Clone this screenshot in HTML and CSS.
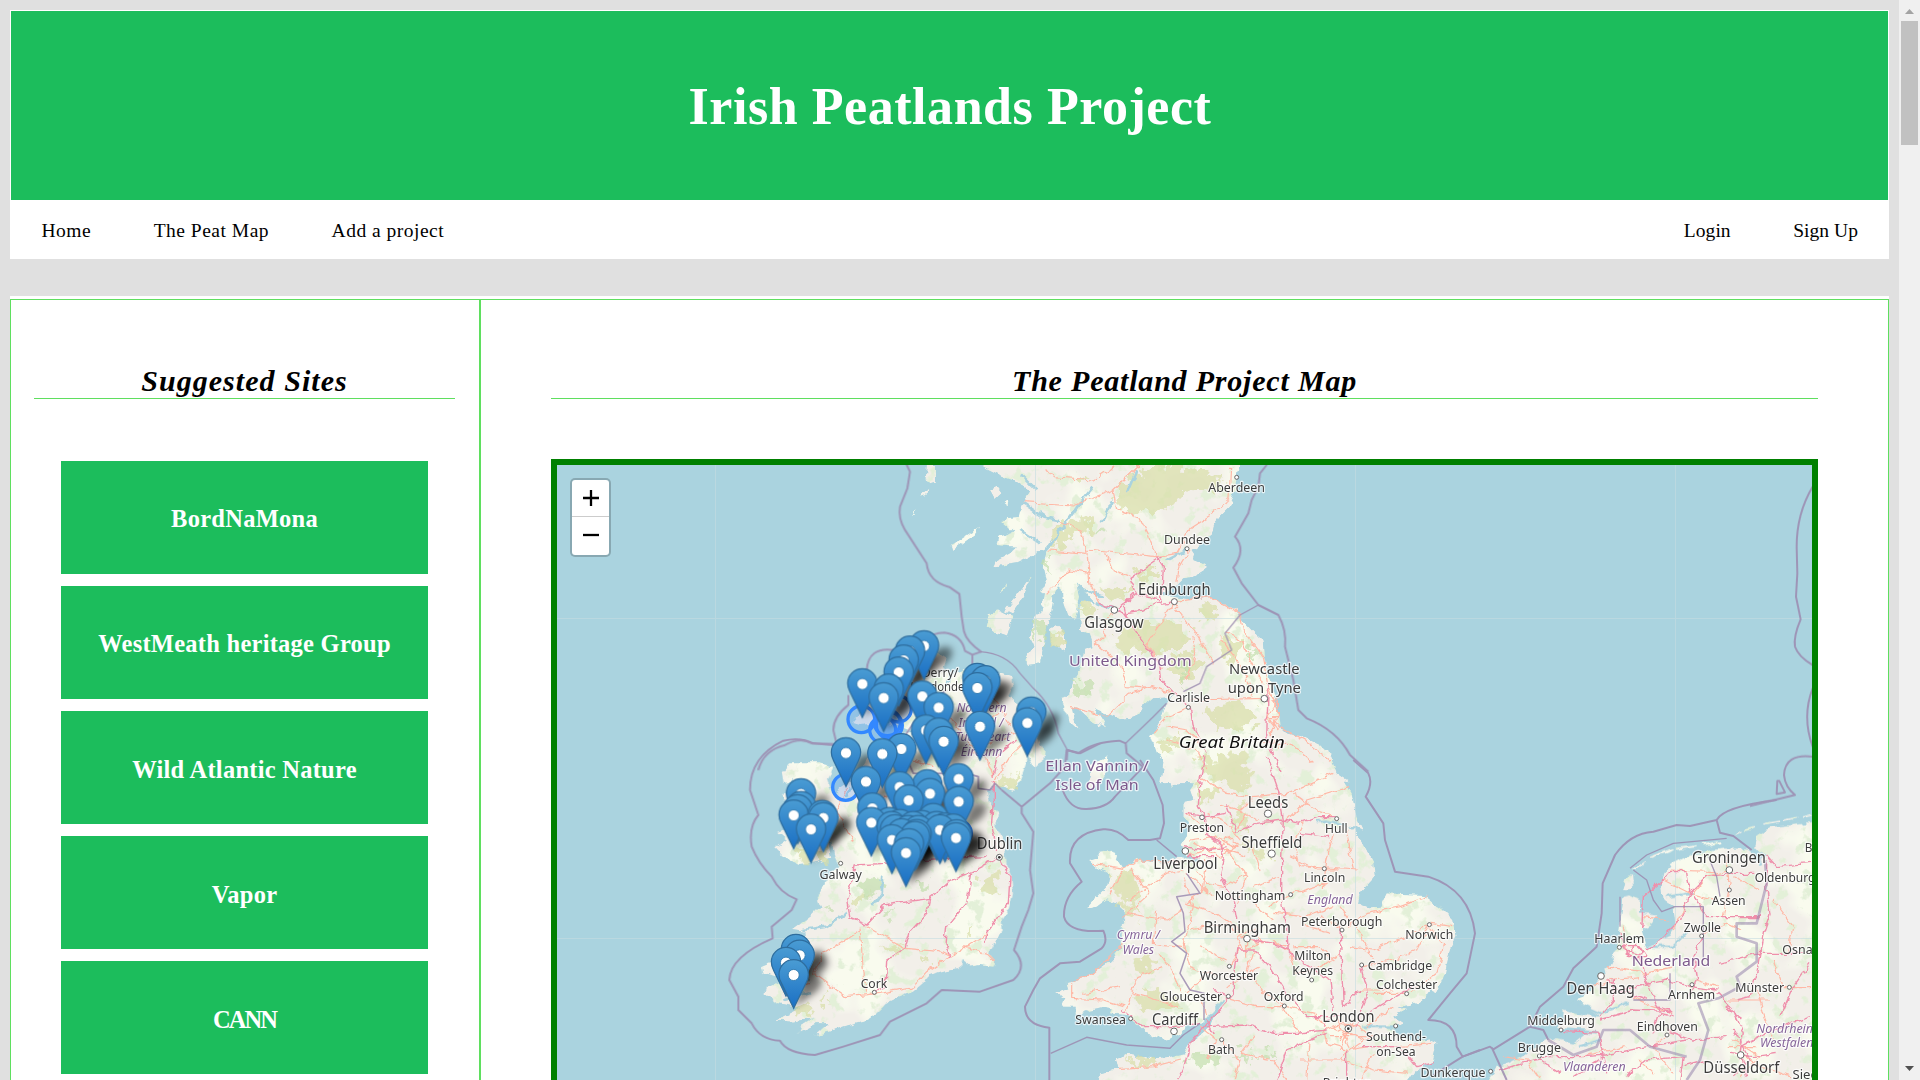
FILE: index.html
```html
<!DOCTYPE html>
<html lang="en">
<head>
<meta charset="utf-8">
<title>Irish Peatlands Project</title>
<link rel="stylesheet" href="styles.css">
</head>
<body>
<div class="page">
  <div class="top">
    <header class="banner"><h1>Irish Peatlands Project</h1></header>
    <nav class="nav">
      <a>Home</a><a>The Peat Map</a><a>Add a project</a>
      <a class="account first">Login</a><a class="account">Sign Up</a>
    </nav>
  </div>
  <div class="columns">
    <aside class="sidebar">
      <h2 class="wide">Suggested Sites</h2>
      <div class="sites">
        <a>BordNaMona</a>
        <a>WestMeath heritage Group</a>
        <a>Wild Atlantic Nature</a>
        <a>Vapor</a>
        <a class="tight">CANN</a>
      </div>
    </aside>
    <main class="main">
      <h2>The Peatland Project Map</h2>
      <div class="map">
        <svg class="tiles" viewBox="557 465 1255 615" width="1255" height="615">
          <defs>
            <linearGradient id="pinfill" x1="0" y1="0" x2="0" y2="1">
              <stop offset="0" stop-color="#4a9cd3"/><stop offset="1" stop-color="#1a6fc4"/>
            </linearGradient>
            <filter id="soft" x="-50%" y="-50%" width="200%" height="200%"><feGaussianBlur stdDeviation="11"/></filter>
            <filter id="veg" x="0" y="0" width="100%" height="100%">
              <feTurbulence type="fractalNoise" baseFrequency="0.07" numOctaves="4" seed="8" result="n"/>
              <feColorMatrix in="n" type="matrix" values="0 0 0 0 .77  0 0 0 0 .87  0 0 0 0 .69  0 9 0 0 -5.1" result="g"/>
              <feTurbulence type="fractalNoise" baseFrequency="0.018" numOctaves="3" seed="3" result="m"/>
              <feColorMatrix in="m" type="matrix" values="0 0 0 0 .95  0 0 0 0 .97  0 0 0 0 .86  5 0 0 0 -2.4" result="y"/>
              <feMerge result="all"><feMergeNode in="SourceGraphic"/><feMergeNode in="y"/><feMergeNode in="g"/></feMerge>
              <feComposite in="all" in2="SourceGraphic" operator="in"/>
            </filter>
            <filter id="rough" x="-5%" y="-5%" width="110%" height="110%">
              <feTurbulence type="fractalNoise" baseFrequency="0.12" numOctaves="2" seed="5" result="t"/>
              <feDisplacementMap in="SourceGraphic" in2="t" scale="7" xChannelSelector="R" yChannelSelector="G"/>
            </filter>
            <filter id="patchy" x="-5%" y="-5%" width="110%" height="110%">
              <feTurbulence type="fractalNoise" baseFrequency="0.1" numOctaves="3" seed="5" result="t"/>
              <feDisplacementMap in="SourceGraphic" in2="t" scale="26" xChannelSelector="R" yChannelSelector="G"/>
            </filter>
            <g id="pin">
              <g transform="scale(3.7) translate(-12.5 -13)">
                <path d="M12.5.6C5.9.6.6 5.9.6 12.5c0 2.6.8 4.900 1.900 6.900L12.500 40 22.500 19.400c1.100-2 1.900-4.300 1.900-6.900C24.400 5.900 19.100.6 12.500.6z" fill="url(#pinfill)" stroke="#2e6d9e" stroke-width="1"/>
                <circle cx="12.500" cy="13" r="4.500" fill="#fff" stroke="#2b76ad" stroke-width=".7"/>
              </g>
            </g>
            <path id="shade" d="M0 98 L30 22 Q50 -6 80 6 Q92 24 68 50 Z" fill="#000"/>
          </defs>
          <rect x="557" y="465" width="1255" height="615" fill="#aad3df"/>
          <g filter="url(#veg)"><g fill="#f2efe9" filter="url(#rough)">
            <g transform="translate(980 450) scale(.33333)">
              <path d="M785 20L770 80 765 120 750 170 720 200 702 225 695 255 665 280 635 300 645 315 640 330 665 340 684 352 660 370 640 380 610 385 590 405 560 425 520 430 580 440 640 450 690 440 730 460 770 480 785 510 820 545 848 570 852 620 872 690 890 770 900 830 920 850 970 860 1020 885 1050 915 1065 960 1065 1000 540 1000 550 940 530 910 513 860 530 830 545 800 560 760 575 742 520 745 490 770 460 800 415 805 380 790 345 775 375 820 370 832 340 815 310 790 295 775 275 770 285 810 293 840 270 820 262 790 248 760 250 740 270 735 275 700 300 660 312 600 340 590 330 555 300 540 295 470 310 455 345 460 310 420 290 400 300 440 285 510 260 490 245 440 240 400 220 440 215 480 205 520 190 590 180 640 140 645 140 620 160 590 150 560 165 500 185 480 195 430 180 430 200 390 190 345 205 290 170 310 110 340 40 350 45 335 90 310 110 290 50 285 55 260 100 245 70 220 80 205 120 200 130 160 150 120 100 90 60 75 10 50 0 20z"/>
              <path d="M20 530L30 490 60 480 100 500 80 560 50 550zM75 480L155 380 130 440 95 490zM210 540L230 525 255 550 255 605 215 580zM60 430L80 400 72 425zM30 120L50 110 65 130 45 148zM68 160L82 150 80 170zM-85 285L0 230-10 250-80 300zM-160 45H-132V95L-150 100-162 80zM-180 140L-155 112-157 135zM-200 195L-192 180-193 195z"/>
            </g>
            <g transform="translate(1040 760) scale(.33333)">
              <path d="M365-30L370 0 400 20 385 50 395 85 425 60 450 45 465 70 450 90 460 120 430 125 430 170 450 195 440 230 425 250 430 275 440 292 410 290 385 308 330 305 290 300 250 325 235 300 215 272 172 278 175 295 150 303 170 320 195 332 212 345 205 375 175 405 138 448 170 440 200 418 235 430 255 465 245 500 245 560 215 600 160 640 100 665 80 668 85 685 45 700 75 715 65 740 110 740 110 765 150 750 190 740 215 745 210 760 260 765 290 790 320 820 375 840 420 825 440 800 490 790 540 730 510 800 450 850 430 880 390 890 340 895 260 883 230 895 240 925 180 940 175 970H1100L1115 950 1130 930 1180 900 1190 850 1165 838 1130 845 1080 830 1060 805 1090 790 1060 770 1100 750 1070 740 1110 735 1150 720 1170 690 1190 700 1215 640 1230 570 1250 530 1240 480 1210 450 1150 405 1040 400 1020 440 990 442 955 430 960 400 1005 350 1000 310 960 230 920 195 850 183 930 200 970 212 950 170 935 100 915 65 930 68 890 40 875 0 865-30z"/>
              <path d="M140 78L150 50 150 15 202-12 195 40 165 85z"/>
            </g>
            <g transform="translate(700 610) scale(.33333)">
              <path d="M640 130L700 120 745 150 730 180 760 190 800 175 830 165 900 190 935 200 940 230 925 260 960 280 985 330 1010 380 1035 420 1030 455 1000 470 985 440 975 470 960 510 940 540 890 525 865 545 870 580 895 610 890 650 915 700 920 760 935 800 940 850 925 900 905 930 908 965 880 1000 865 1030 885 1055 880 1070 840 1065 810 1070 785 1050 780 1075 740 1080 690 1095 670 1120 640 1145 600 1160 560 1180 545 1195 530 1210 500 1230 430 1250 400 1262 345 1275 385 1240 350 1240 295 1268 300 1250 340 1225 280 1235 225 1232 260 1215 300 1195 235 1182 195 1150 200 1135 240 1115 270 1110 190 1090 185 1070 220 1055 215 1040 300 1030 340 1030 320 1000 315 965 275 960 330 920 360 890 350 860 385 800 415 770 400 740 350 760 300 765 250 740 225 715 260 690 230 665 290 650 240 620 265 590 250 560 285 510 250 520 245 490 270 460 360 460 400 470 385 510 400 550 440 520 470 500 500 450 520 420 560 405 580 385 600 370 640 365 600 350 550 340 480 345 455 340 480 310 500 260 530 230 560 190 610 150z"/>
            </g>
            <g transform="translate(1440 800) scale(.33333)">
              <path d="M120 870L170 805 240 770 300 730 330 712 400 730 450 690 350 685 370 650 370 630 410 640 480 650 410 600 430 590 470 550 500 510 530 450 540 380 550 290 570 285 600 300 600 340 650 345 640 370 605 390 620 440 690 405 705 370 700 320 670 300 665 240 670 215 700 190 760 160 850 145 925 145 945 180 980 165 945 150 950 110 990 80 1050 75 1140 65V870z"/>
              <path d="M545 270L560 225 580 222 582 248 560 272zM580 207l38-24 4 5-38 24zM628 170l70-26 4 7-70 24zM708 143l62-8v7l-62 8zM788 133l50-10v7l-48 9zM885 103l20-10v6l-18 8zM915 88l30-8v6l-28 8zM965 70l55-10v6l-52 9zM1030 58l45-9v6l-43 9zM1085 48l30-5v6l-28 5z"/>
            </g>
          </g></g>
          <!-- upland and heath areas -->
          <g fill="#d8dfa8" opacity=".7" filter="url(#patchy)">
            <g transform="translate(980 450) scale(.33333)"><path d="M410 120L470 70 560 45 650 50 730 90 720 125 650 120 590 150 520 190 450 190 405 160zM220 250L250 220 340 205 350 235 280 255 240 300 220 270zM350 430L400 400 450 410 450 440 380 450zM460 380L510 345 530 370 480 395zM400 550L480 520 600 515 640 560 600 600 560 600 500 610 420 600zM300 470L340 465 350 490 310 510zM650 480L700 455 720 490 670 515zM560 640L620 600 660 640 640 690 590 690 550 660zM680 770L780 755 830 800 790 850 740 830 700 830zM530 890L590 850 610 880 560 910zM740 560L790 580 750 640 720 620zM210 550L250 540 250 590 220 590zM290 80L320 75 310 105 280 100z"/></g>
            <g transform="translate(1040 760) scale(.33333)"><path d="M470-10L610-15 640 50 610 95 540 70 500 40zM460 90L530 80 540 100 490 125zM580 150L610 130 620 210 590 190zM600 230L690 290 670 310 640 290zM220 340L280 330 300 400 270 420 300 480 260 450 230 390zM280 600L340 590 330 640 290 640zM280 700L370 690 420 740 300 750zM260 895L350 890 340 915 280 910z"/></g>
            <g transform="translate(700 610) scale(.33333)"><path d="M840 800L890 765 900 780 880 860 850 850zM900 500L960 490 950 530 910 535zM800 950L820 935 810 980 795 985zM270 1180L340 1185 330 1220 290 1210zM280 710L390 730 370 755 290 745zM360 1160L380 1150 370 1190zM560 1010L610 1010 590 1030 560 1030zM660 1030L690 1040 670 1070zM450 860L500 840 510 850 470 890z"/></g>
          </g>
          <g fill="#c3dfae" opacity=".7" filter="url(#patchy)">
            <g transform="translate(980 450) scale(.33333)"><path d="M290 690L330 680 340 720 300 740zM190 340L210 330 205 370zM170 510L190 520 175 590 165 570zM590 620L640 650 610 700zM340 240L370 235 370 260zM800 590L830 600 820 630z"/></g>
            <g transform="translate(1040 760) scale(.33333)"><path d="M440 895L520 870 560 890 470 915zM570 870L630 875 620 900zM640 890L710 870 700 890z"/></g>
            <g transform="translate(700 610) scale(.33333)"><path d="M480 820L530 790 550 830 510 870zM540 920L580 900 570 940zM380 890L410 885 400 910zM640 820L690 810 680 840z"/></g>
          </g>
          <!-- sea lochs, estuaries and rivers -->
          <g fill="none" stroke="#aad3df" stroke-width="8" filter="url(#rough)">
            <g transform="translate(980 450) scale(.33333)"><path d="M130 160L190 200 240 210M200 295L300 160 340 110M120 240L180 280M310 420L370 440M350 460L420 485M560 330L620 300M365 215L400 150M440 130L470 60M170 120L120 70"/></g>
            <g transform="translate(700 610) scale(.33333)"><path d="M310 960L380 950 440 910M550 800L545 850 520 885M480 470L440 560M750 190L740 230M400 740L390 690M270 1110L330 1110M250 1170L330 1150"/></g>
            <g transform="translate(1440 800) scale(.33333)"><path d="M400 605L480 640 560 610M370 690L470 700M480 720L420 740M620 440L700 440 750 390M680 290L760 280M945 150L960 190"/></g>
            <g transform="translate(1040 760) scale(.33333)"><path d="M830 185L860 182 920 195M970 800L1080 800M490 790L550 720M415 285L480 300"/></g>
          </g>
          <g stroke="#c5dde2" stroke-width="1" opacity=".6"><path d="M715.500 465V1080M1035.500 465V1080M1355.500 465V1080M1675.500 465V1080M557 618.500H1812M557 938.500H1812"/></g>
          <g id="roads" fill="none" stroke-linejoin="round" filter="url(#rough)"></g>
          <g fill="none" stroke="#9c8bb0" stroke-width="6" stroke-linejoin="round" opacity=".85">
            <g transform="translate(540 450) scale(.33333)"><path d="M1098 40L1110 65 1102 115 1080 170Q1074 205 1095 240L1160 340Q1165 395 1228 411L1258 432 1265 500 1272 545Q1280 575 1323 605L1297 614 1275 603Q1265 555 1213 548 1180 548 1150 570M1297 614V660M1060 600Q985 590 980 660M925 735V765Q880 800 880 840L890 882 815 880Q780 860 735 885 670 900 655 960"/></g>
            <g transform="translate(700 610) scale(.33333)"><path d="M400 405L340 400Q300 380 250 392 150 440 150 540L175 615Q145 650 155 710 175 760 215 800 240 850 290 868L275 900 215 950 218 985Q90 1040 88 1110L115 1160V1200L155 1240Q180 1290 240 1292 260 1330 345 1335L430 1310 540 1275 570 1235 680 1180 725 1140 840 1145 940 1110Q985 1070 942 1020L965 950 985 900 1000 850 990 780 1000 665 965 610V590L905 540M965 590L1050 520 1095 470 1100 420 1140 430 1200 400"/>
              <path stroke-width="5" d="M905 540L885 520 870 540 835 535 835 500 800 490 640 490 600 400 640 340 680 280 740 240"/></g>
            <g transform="translate(980 450) scale(.33333)"><path d="M262 900L260 930M262 900L295 910Q340 875 418 872L437 880 440 910 500 960M860 45L840 70 835 110 815 150 805 190 765 260Q800 300 760 353L785 400 835 465 895 495Q920 540 915 590L940 690 955 780 980 805Q1070 840 1110 915L1165 965"/>
              <path stroke-width="4" d="M0 605Q80 610 120 670L160 715Q220 770 235 850L262 900M437 880L520 800 560 760M835 465L780 495 735 550 755 600 680 650 660 700 610 725"/></g>
            <g transform="translate(1040 760) scale(.33333)"><path d="M300 0L340 60 368 135 372 190 360 235 330 240 265 240Q230 205 190 208 85 220 90 310L125 365Q70 410 72 470 85 520 190 512 205 545 185 565L120 605 60 610 0 655-20 690-45 740Q-45 795 28 803V970M68 90Q90 150 140 147 200 145 225 110L310 20M940 0L985 40Q1000 70 977 110L1030 190 1035 240 1065 335 1165 350Q1290 390 1305 520L1280 640 1230 700 1165 780Q1250 780 1250 860L1268 890 1320 870M1268 890L1180 945"/>
              <path stroke-width="4.500" d="M32 880L140 832 260 855 390 865 430 825 480 790M350 240L410 290M440 340L480 400 410 410 430 460 435 515 395 545 440 580 420 640 450 690 492 700V780"/></g>
            <g transform="translate(1440 800) scale(.33333)"><path d="M68 770L150 740 160 748 270 680 300 620 370 560 400 505 470 440 485 340 488 250 525 165Q570 100 640 95L710 75 750 78 830 60Q850 20 1010 0M155 742L200 840M270 680L310 690 325 720M830 60L840 98 880 108 935 150"/>
              <path stroke-width="4" d="M580 210L620 240 640 300 665 335 705 320M570 205L620 165 700 130 860 115M805 170L830 230 840 290M700 320L790 320 790 480M540 290L540 380M580 600L690 600 690 520"/>
              <path stroke-width="8" opacity=".7" d="M975 180L980 250 950 370 890 370 890 410 950 430 950 485 890 530 900 560 835 595 775 610 805 690 780 780 740 840M325 720L400 765 470 740 490 690 570 690 630 740 740 770"/></g>
            <g transform="translate(1380 450) scale(.33333)"><path d="M1298 110Q1250 190 1250 290L1252 370 1248 440 1262 508Q1240 560 1245 590 1255 620 1298 645M1298 715Q1265 800 1298 890M1298 920Q1215 910 1212 975 1215 1010 1245 1035L1110 1068M1192 993H1198L1215 1027 1190 1032z"/></g>
          </g>
          <g id="cities"></g>
          <g id="labels"></g>
          <g transform="translate(700 610) scale(.33333)">
            <g fill="#3388ff" fill-opacity=".2" stroke="#3388ff" stroke-width="10">
              <circle cx="484" cy="328" r="40"/><circle cx="437" cy="532" r="39"/><circle cx="595" cy="297" r="39"/><circle cx="548" cy="360" r="39"/><circle cx="568" cy="346" r="39"/><circle cx="562" cy="338" r="39"/><circle cx="775" cy="670" r="39"/>
            </g>
            <g id="shades" filter="url(#soft)"></g>
            <g id="pins"></g>
          </g>
        </svg>
        <div class="zoom">
          <span><svg width="18" height="18"><path d="M1 9H17M9 1V17" stroke="#000" stroke-width="2.300"/></svg></span>
          <span><svg width="18" height="18"><path d="M1 9H17" stroke="#000" stroke-width="2.300"/></svg></span>
        </div>
      </div>
    </main>
  </div>
</div>
<div class="scrollbar">
  <svg width="21" height="21"><path d="M6 14L10.500 9 15 14z" fill="#a3a3a3"/></svg>
  <div class="thumb"></div>
  <svg class="down" width="21" height="21"><path d="M6 7L10.500 12 15 7z" fill="#505050"/></svg>
</div>
<script src="map.js"></script>
</body>
</html>
```
FILE: styles.css
```css
* { box-sizing: border-box; }
html { height: 100%; }
body {
  margin: 0;
  height: 1080px;
  overflow: hidden;
  display: flex;
  background: #e0e0e0;
  color: #000;
  font-family: "Liberation Serif", serif;
}
.page {
  width: 1899px;
  height: 1080px;
  padding: 10px 10px 0;
  overflow: hidden;
}
.top { background: #fff; height: 249px; }
.banner {
  height: 190px;
  border: 1px solid #fff;
  border-bottom: 0;
  background: #1cbd5c;
  display: flex;
  justify-content: center;
  align-items: center;
}
h1 {
  margin: 0;
  padding: 3px 0 0 1px;
  font-size: 52px;
  line-height: 60px;
  letter-spacing: 0.550px;
  color: #fff;
}
.nav {
  display: flex;
  height: 59px;
  align-items: center;
  font-size: 19.500px;
  letter-spacing: 0.500px;
}
.nav a { padding: 2px 31px 0 31.500px; }
.nav .account { letter-spacing: 0.050px; }
.nav .first { margin-left: auto; }
.columns {
  display: flex;
  margin-top: 37px;
  padding-top: 3px;
  height: 900px;
  background: #fff;
}
.sidebar, .main { border: 1px solid #5fdf5f; }
.sidebar { width: 470px; padding: 62px 24px 0 23px; }
.main { width: 1409px; padding: 62px 70px 0; }
h2 {
  margin: 0;
  height: 37px;
  border-bottom: 1px solid #5fdf5f;
  font-size: 30px;
  font-style: italic;
  line-height: 38px;
  letter-spacing: 0.800px;
  text-align: center;
}
.wide { letter-spacing: 1.050px; }
.sites {
  display: flex;
  flex-direction: column;
  gap: 12.400px;
  margin: 62px 27px 0;
}
.sites a {
  height: 112.700px;
  flex: none;
  padding-top: 4px;
  display: flex;
  align-items: center;
  justify-content: center;
  background: #1cbd5c;
  color: #fff;
  font-size: 24.500px;
  font-weight: bold;
  letter-spacing: 0.250px;
}
.sites .tight { letter-spacing: -2px; }
.map {
  position: relative;
  margin-top: 60px;
  height: 760px;
  border: 6px solid #008000;
  overflow: hidden;
  background: #aad3df;
}
.tiles { display: block; font-family: "Noto Sans", sans-serif; }
.zoom {
  position: absolute;
  left: 13px;
  top: 13px;
  width: 41px;
  height: 79px;
  border: 2px solid rgba(0, 0, 0, 0.2);
  border-radius: 5px;
  background: #fff;
  background-clip: padding-box;
}
.zoom span { display: flex; height: 36px; padding-left: 1px; align-items: center; justify-content: center; }
.zoom span:first-child { height: 37px; border-bottom: 1px solid #ccc; }
.scrollbar { width: 21px; height: 1080px; background: #f0f0f0; display: flex; flex-direction: column; }
.scrollbar svg { display: block; flex: none; }
.thumb { margin: 0 2px; height: 124px; background: #c1c1c1; }
.down { margin-top: auto; }
.label { text-anchor: middle; fill: #3c3c3c; stroke: #fff; stroke-opacity: 0.75; stroke-width: 7px; stroke-linejoin: round; paint-order: stroke; }
.label.region { fill: #7d5a8c; }
.label.area { fill: #86659a; font-style: italic; }
.label.island { fill: #111; font-style: italic; }
```
FILE: map.js
```js
const NS = "http://www.w3.org/2000/svg";
const origin = {
  scot: [980, 450], eng: [1040, 760], ire: [700, 610], ned: [1440, 800]
};
function add(parent, name, attrs, text) {
  const el = document.createElementNS(NS, name);
  for (const key in attrs) el.setAttribute(key, attrs[key]);
  if (text) el.textContent = text;
  parent.appendChild(el);
  return el;
}
function layer(id, sheet) {
  const [x, y] = origin[sheet];
  return add(document.getElementById(id), "g", { transform: `translate(${x} ${y}) scale(.33333)` });
}

// [text, centre, baseline, width, size, style]
const labels = {
  scot: [
    ["Aberdeen", 770, 127, 170, 38], ["Dundee", 621, 283, 138, 38], ["Edinburgh", 583, 434, 218, 46],
    ["Glasgow", 402, 534, 178, 46], ["United Kingdom", 451, 647, 368, 45, "region"],
    ["Newcastle", 853, 671, 212, 43], ["upon Tyne", 853, 728, 220, 43], ["Carlisle", 626, 757, 128, 38],
    ["Great Britain", 755, 893, 318, 46, "island"]
  ],
  eng: [
    ["Ellan Vannin /", 171, 34, 310, 43, "region"], ["Isle of Man", 171, 90, 250, 43, "region"],
    ["Leeds", 684, 143, 122, 46], ["Preston", 486, 215, 133, 38], ["Hull", 889, 219, 68, 38],
    ["Sheffield", 696, 263, 183, 46], ["Liverpool", 436, 328, 193, 46], ["Lincoln", 854, 367, 124, 38],
    ["Nottingham", 630, 419, 212, 38], ["England", 870, 431, 136, 38, "area"],
    ["Peterborough", 905, 497, 244, 38], ["Birmingham", 622, 518, 262, 46], ["Norwich", 1168, 537, 144, 38],
    ["Cymru /", 295, 538, 130, 38, "area"], ["Wales", 295, 583, 95, 38, "area"],
    ["Milton", 818, 600, 110, 38], ["Keynes", 818, 645, 122, 38], ["Worcester", 567, 660, 175, 38],
    ["Cambridge", 1080, 629, 193, 38], ["Colchester", 1100, 687, 184, 38], ["Gloucester", 453, 724, 187, 38],
    ["Oxford", 731, 724, 120, 38], ["London", 925, 785, 157, 46], ["Swansea", 182, 791, 152, 38],
    ["Cardiff", 405, 795, 138, 46], ["Southend-", 1068, 842, 180, 38], ["on-Sea", 1068, 887, 118, 38],
    ["Bath", 544, 883, 80, 38], ["Dunkerque", 1239, 950, 195, 38], ["Brighton", 922, 981, 148, 38]
  ],
  ire: [
    ["Derry/", 720, 200, 110, 36], ["Londonderry", 735, 244, 208, 36],
    ["Northern", 845, 305, 150, 36, "area"], ["Ireland /", 843, 350, 135, 36, "area"],
    ["Tuaisceart", 848, 394, 165, 36, "area"], ["Éireann", 845, 438, 125, 36, "area"],
    ["Dublin", 899, 718, 137, 46], ["Galway", 422, 807, 127, 38], ["Cork", 522, 1135, 80, 40]
  ],
  ned: [
    ["Bremen", 1160, 155, 132, 38], ["Groningen", 867, 190, 222, 46], ["Oldenburg", 1035, 247, 182, 38],
    ["Assen", 866, 314, 102, 38], ["Zwolle", 787, 395, 112, 38], ["Haarlem", 538, 429, 150, 38],
    ["Nederland", 693, 499, 236, 45, "region"], ["Osnabrück", 1122, 462, 190, 38],
    ["Den Haag", 482, 582, 205, 46], ["Münster", 959, 577, 147, 38], ["Arnhem", 755, 598, 142, 38],
    ["Middelburg", 363, 676, 203, 38], ["Eindhoven", 682, 692, 183, 38],
    ["Nordrhein-", 1040, 699, 182, 38, "area"], ["Westfalen", 1040, 742, 160, 38, "area"],
    ["Brugge", 298, 755, 130, 38], ["Vlaanderen", 463, 814, 188, 38, "area"],
    ["Düsseldorf", 904, 818, 228, 46], ["Siegen", 1120, 838, 125, 38]
  ]
};
for (const sheet in labels) {
  const g = layer("labels", sheet);
  for (const [text, x, y, w, size, style] of labels[sheet]) {
    add(g, "text", { class: "label " + (style || ""), x, y, "font-size": size, textLength: w, lengthAdjust: "spacingAndGlyphs" }, text);
  }
}

// [x, y, radius]
const cities = {
  scot: [[770, 82, 6], [621, 296, 6], [583, 455, 9], [403, 480, 10], [853, 746, 10], [625, 772, 6]],
  eng: [[486, 172, 7], [684, 161, 11], [890, 176, 6], [695, 281, 11], [436, 273, 10], [853, 326, 6], [752, 404, 6],
    [906, 510, 6], [621, 536, 10], [1168, 494, 6], [568, 619, 6], [815, 660, 6], [965, 615, 6], [1100, 701, 6],
    [565, 709, 6], [733, 738, 6], [925, 806, 10], [272, 776, 6], [402, 814, 10], [1067, 798, 6], [545, 839, 6]],
  ire: [[898, 742, 9], [422, 760, 6], [523, 1147, 6]],
  ned: [[868, 210, 10], [868, 270, 6], [785, 408, 6], [538, 442, 6], [483, 528, 10], [756, 554, 6], [1048, 562, 6],
    [363, 690, 6], [681, 705, 6], [298, 768, 6], [902, 765, 10], [152, 814, 6]]
};
for (const sheet in cities) {
  const g = layer("cities", sheet);
  for (const [cx, cy, r] of cities[sheet]) {
    add(g, "circle", { cx, cy, r, fill: "#fff", stroke: "#666", "stroke-width": 3 });
  }
}
add(layer("cities", "ire"), "circle", { cx: 898, cy: 742, r: 4, fill: "#333" });
add(layer("cities", "eng"), "circle", { cx: 925, cy: 806, r: 4, fill: "#333" });

const trunk = {
  scot: ["M480 45L400 120 410 180 480 205 505 255 530 320 590 310 630 235 700 190 750 140 755 50",
    "M200 55L220 80 340 90 400 50M130 155L280 165 400 120M240 215L300 240 320 300 530 320M320 300L330 400 360 460",
    "M205 300L320 310M200 430L270 360 330 370M380 310L400 360 450 380M590 395L600 350 630 300M585 455L690 440 780 490 790 540 850 620 865 700",
    "M585 455L500 580 550 660M580 460L650 555 700 640M345 580L370 560 380 510 410 480M345 580L420 640 440 710 510 715M270 770L380 800 450 730 520 710 600 740M630 770L560 800 520 850M640 560L650 590 620 690M740 545L780 570 850 700M630 750L860 745M860 790L900 830 970 870 1050 930M860 700L895 790 870 850 900 900M660 880L620 840 560 830M720 560L800 680 820 740",
    "M860 720L890 760 860 800 895 840 870 800M870 750H895V800H860M850 880L930 880 1000 940M560 870L650 900 680 960"],
  eng: ["M480 50L560 100 640 110 740 100 880 40M640 110L600 150 650 180M760 100L830 150 880 170M740 180L800 120 930 80M790 190L760 250 780 320 960 330M880 220L860 300 850 390M920 210L940 330M440 290L530 260 620 290M450 240L520 230 590 260 540 290 460 250M540 130L620 160 580 220M500 160L560 190 600 240M440 160L480 190M560 230l30 20-20 30-30-20zM545 240L580 260M560 270L620 350 590 430M620 340L560 380 500 370 470 330M500 300L490 390 440 430 530 460 600 510M440 340L520 410M640 380L720 350M640 430L700 480M660 330L640 260M750 290L830 330 900 330M860 370L760 400 680 440M880 440L790 470 700 460M900 500L840 470M920 500L980 460 1080 440 1160 410M1170 490L1100 530 1000 570 930 560M1170 490L1240 500M1170 490L1130 570 1060 600 970 620M1170 500L1210 560 1190 640 1110 700M160 310L250 325 300 300 430 310M250 330L210 400M270 420L380 340 430 330M270 330L330 400 250 470M260 460L380 480 430 450M350 450L340 550 430 560M250 550L160 640 95 665M360 580L400 640 420 700M95 670V715L190 720 250 740M260 750L290 650 370 620M280 700L350 720 410 740M130 700L240 680M430 350L460 440 430 550 450 620 540 650M450 510L560 490 610 530M570 620L600 560M480 560L560 600M500 640L440 700M640 570L620 640 680 700 730 738M700 540L750 580 770 640 840 620 900 580M660 620L560 680M560 715L650 740 730 740 780 820M740 740L820 760 860 800M880 600L840 560 760 560M1000 600L960 520 900 440M1000 700L1100 700M960 690L1060 690M1060 740L980 800M900 900L920 870 990 860 1080 860 1180 850M545 840L600 900 580 960M480 800L530 840 500 900M240 925L340 920 420 900M640 830L600 880 700 900 740 960M850 810L900 790 960 800 990 830 930 870 860 850zM880 800L970 840M900 870L940 780M870 830H1000M890 780L930 860M960 780L900 840M780 900L900 900 1000 930 1100 940M810 850L800 960M1000 880L960 960M600 530L660 550 610 570 590 530 640 510 670 550M620 510V590M640 540L750 560M870 520L800 500M490 720L500 770"],
  ire: ["M460 700L410 600 440 540M480 950L490 1080 500 1145M500 950L615 1015 720 1025 750 1040M480 960L370 1030 340 1090 440 1160 540 1150 640 1130 680 1085 750 1040 800 1010 860 970M790 1010L860 1030 885 1055M250 1150L330 1120M600 500L560 560 500 600M700 470L640 450 580 460M850 230L900 290 930 350M780 390L900 310M860 400L950 370 1010 400M880 500L850 420 800 430M880 520L930 440 970 400M740 310L840 440"],
  ned: ["M690 210L830 215M670 240L750 280 830 300M740 310L700 390M860 170L870 250 850 350M880 230L960 270M760 280L800 230 870 210M610 350L690 360M790 400L860 370 900 390M550 380L560 460M500 500L620 520 700 500M450 560L520 540 600 530M700 640L640 620 580 590M680 700L640 740 700 820M860 600L990 600M830 560L770 540M1000 300L1060 380 1040 460M1000 480L1030 560 1110 560M190 770L260 780 300 840M420 770L560 740M600 780L640 820M950 560L970 640 1000 720M900 760L960 800 1050 830M880 720L960 770 900 830M860 740L950 740"]
};
const motorway = {
  scot: ["M530 320L550 350 545 450 490 480 430 490 360 460M585 455L540 460M545 320L530 330 450 385 470 430 410 480M430 490L500 590 540 650 545 690 580 730 630 770 640 830 680 910M865 700L860 860 900 960M420 480L440 500 430 460 460 430 540 450"],
  eng: ["M495-10L480 60 475 140 500 180 500 220 540 250 550 290 540 340 580 420 590 480M680-10L715 90 730 180 725 290 725 430 740 490 745 580 870 660 880 750M560 130L590 215 650 190 730 180 780 190 840 170 890 170M430 260L500 270 560 260M440 290L520 290M590 570L580 650 580 700 500 790 450 850 430 930 410 960M590 570H640L690 620 740 700 800 770 870 770M500 800L620 795 700 820 770 820 860 810M640 540L700 550 745 570M900 500L905 620 910 740M965 620L985 700 960 760 950 800M910 740L960 690M850 800L870 770 900 770M970 860L1080 860 1130 920 1180 905M860 820L740 870 710 960M920 870V960M250 750L310 800 400 800 480 790M500 780L520 820M520 690L560 710M780 220L870 230M440 160L500 170 560 160M1120 680L980 760"],
  ire: ["M898 742L815 785 745 815 690 865 555 885 500 945 450 925 440 870 460 800 465 765 555 760 640 750 860 740M815 790L800 880 740 950 735 1000 750 1045M690 860L680 910 630 965 615 1015 560 1050 555 1130 525 1145M898 745L930 800 925 880 860 970 855 1000M890 720L875 640 880 570 880 510M880 500L890 440 950 390"],
  ned: ["M605 390L610 290 670 240 690 215 740 215 750 280 800 230 880 220 940 220M980 165L1010 200 1110 190M725 360L740 310 750 280M720 360L650 430 620 450M760 290L800 350 960 350M790 410L760 470 770 540 740 600M555 450L600 460 620 540 660 640 640 700M540 440L600 440 620 470 560 470M500 540L540 570 680 540 750 560 830 570M520 540L520 600 480 650M480 660L580 630 700 635M980 180L980 260 990 340 970 400 950 520 930 590 890 600M840 490L950 460 1110 460M830 580L880 630 910 700 900 760 920 830M660 640L700 650 690 630 650 620M680 690L760 720 860 710M540 570L620 600M560 460l30-25 20 20-20 20zM300 770L430 770 500 765 620 740 740 720M370 695L480 700 490 760 500 820M490 770L400 830M180 810L240 790 300 780 360 820M860 620L910 660M900 740L1000 690 1110 650M870 760L940 770 1010 760M730 800L800 780M880 690L930 780 880 830M1110 490L1060 560 1020 650M560 830L620 780 730 770 720 840M540 400L560 460"]
};
for (const [set, color, width] of [[trunk, "#ffb8a6", 3.6], [motorway, "#ef8fab", 4.2]]) {
  for (const sheet in set) {
    const g = layer("roads", sheet);
    for (const d of set[sheet]) add(g, "path", { d, stroke: color, "stroke-width": width });
  }
}

const pins = [
  [672, 108], [630, 124], [611, 151], [596, 187], [487, 222], [566, 238], [551, 264], [832, 206], [856, 213],
  [832, 234], [667, 259], [716, 293], [994, 307], [982, 339], [840, 350], [678, 361], [716, 370], [731, 395],
  [604, 417], [438, 429], [547, 432], [776, 507], [498, 515], [682, 525], [599, 531], [690, 551], [303, 552],
  [626, 571], [776, 575], [303, 590], [293, 600], [517, 595], [281, 616], [367, 617], [370, 624], [700, 626], [568, 638],
  [514, 638], [600, 644], [665, 647], [575, 650], [640, 650], [710, 650], [735, 655], [585, 660], [760, 658],
  [333, 658], [625, 662], [655, 662], [720, 660], [770, 675], [605, 672], [650, 674], [645, 680], [768, 684],
  [576, 690], [627, 702], [618, 729], [288, 1019], [299, 1036], [258, 1058], [281, 1095]
];
for (const [x, y] of pins) {
  add(document.getElementById("shades"), "use", { href: "#shade", x, y, opacity: 0.5 });
  add(document.getElementById("pins"), "use", { href: "#pin", x, y });
}
```
